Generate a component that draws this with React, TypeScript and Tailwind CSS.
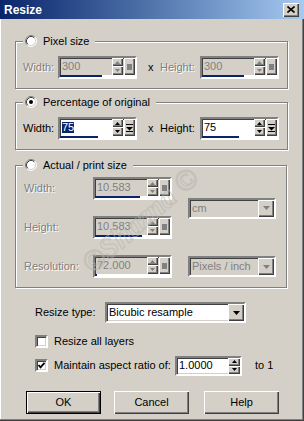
import React from "react";

const sunken =
  "border-2 border-t-[#808080] border-l-[#808080] border-b-white border-r-white shadow-[inset_1px_1px_0_#404040,inset_-1px_-1px_0_#d4d0c8]";
const raised =
  "bg-[#d4d0c8] shadow-[inset_1px_1px_0_#ffffff,inset_-1px_-1px_0_#404040,inset_-2px_-2px_0_#808080]";
const grayText = "text-[#808080] [text-shadow:1px_1px_0_#ffffff]";

function Tri({ up = false, color = "#000", w = 7, h = 4 }: { up?: boolean; color?: string; w?: number; h?: number }) {
  const d = up ? `M0 ${h}H${w}L${w / 2} 0Z` : `M0 0H${w}L${w / 2} ${h}Z`;
  return (
    <svg width={w} height={h} viewBox={`0 0 ${w} ${h}`}>
      <path d={d} fill={color} />
    </svg>
  );
}

function Radio({ checked = false }: { checked?: boolean }) {
  return (
    <svg width="12" height="12" viewBox="0 0 12 12" className="shrink-0">
      <circle cx="6" cy="6" r="5" fill="#fff" />
      <path d="M2.11 9.89A5.5 5.5 0 0 1 9.89 2.11" stroke="#808080" fill="none" />
      <path d="M2.82 9.18A4.5 4.5 0 0 1 9.18 2.82" stroke="#404040" fill="none" />
      <path d="M9.89 2.11A5.5 5.5 0 0 1 2.11 9.89" stroke="#fff" fill="none" />
      <path d="M9.18 2.82A4.5 4.5 0 0 1 2.82 9.18" stroke="#d4d0c8" fill="none" />
      {checked && <circle cx="6" cy="6" r="2" fill="#000" />}
    </svg>
  );
}

function Check({ checked = false }: { checked?: boolean }) {
  return (
    <div className={`w-[13px] h-[13px] bg-white shrink-0 flex items-center justify-center ${sunken}`}>
      {checked && (
        <svg width="9" height="9" viewBox="0 0 9 9">
          <path d="M1.5 4 L3.5 6.3 L7.5 1.8" stroke="#000" strokeWidth="1.8" fill="none" />
        </svg>
      )}
    </div>
  );
}

type FieldProps = {
  value: string;
  enabled?: boolean;
  selected?: boolean;
  bar: number;
};

function NumField({ value, enabled = false, selected = false, bar }: FieldProps) {
  const arrow = enabled ? "#000" : "#808080";
  return (
    <div className={`w-[79px] h-[23px] flex flex-col ${sunken} ${enabled ? "bg-white" : "bg-[#d4d0c8]"}`}>
      <div className="flex h-[17px]">
        <div className="flex-1 flex items-center pl-[2px] leading-none">
          <span className={selected ? "bg-[#0a246a] text-white" : enabled ? "text-black" : "text-[#808080]"}>{value}</span>
        </div>
        <div className="w-[11px] flex flex-col">
          <div className={`h-[8px] flex items-center justify-center ${raised}`}>
            <Tri up w={5} h={3} color={arrow} />
          </div>
          <div className={`h-[9px] flex items-center justify-center ${raised}`}>
            <Tri w={5} h={3} color={arrow} />
          </div>
        </div>
        <div className={`w-[11px] ml-[1px] flex items-center justify-center ${raised}`}>
          {enabled ? (
            <svg width="7" height="8" viewBox="0 0 7 8">
              <rect x="0" y="0" width="7" height="1" fill="#000" />
              <path d="M0 3H7L3.5 6.5Z" fill="#000" />
              <rect x="0" y="7" width="7" height="1" fill="#000" />
            </svg>
          ) : (
            <div className="w-[5px] h-[6px] bg-[#808080]" />
          )}
        </div>
      </div>
      <div className="h-[2px] flex bg-white">
        <div className="h-full bg-[#0a246a]" style={{ width: bar }} />
      </div>
    </div>
  );
}

function Select({ value, enabled = false, w }: { value: string; enabled?: boolean; w: string }) {
  return (
    <div className={`${w} h-[21px] flex ${sunken} ${enabled ? "bg-white" : "bg-[#d4d0c8]"}`}>
      <div className={`flex-1 flex items-center pl-[2px] ${enabled ? "text-black" : "text-[#808080]"}`}>{value}</div>
      <div className={`w-[16px] flex items-center justify-center ${raised}`}>
        <Tri color={enabled ? "#000" : "#808080"} />
      </div>
    </div>
  );
}

function Legend({ label, checked = false }: { label: string; checked?: boolean }) {
  return (
    <legend className="h-[14px] pl-[2px] pr-[6px] -ml-[1px] flex items-center gap-[6px] bg-[#d4d0c8]">
      <Radio checked={checked} />
      <span>{label}</span>
    </legend>
  );
}

const groupBox =
  "border border-[#808080] shadow-[inset_1px_1px_0_#ffffff,1px_1px_0_#ffffff] px-[8px]";

function SizeRow({ enabled, w, h, selected }: { enabled: boolean; w: [string, number]; h: [string, number]; selected?: boolean }) {
  const label = enabled ? "text-black" : grayText;
  return (
    <div className="flex items-center h-[23px] -ml-[1px]">
      <span className={`w-[35px] ${label}`}>Width:</span>
      <NumField value={w[0]} bar={w[1]} enabled={enabled} selected={selected} />
      <span className="ml-[11px] w-[6px]">x</span>
      <span className={`ml-[6px] w-[40px] ${label}`}>Height:</span>
      <NumField value={h[0]} bar={h[1]} enabled={enabled} />
    </div>
  );
}

export default function App() {
  return (
    <div className="relative w-[304px] h-[421px] bg-[#d4d0c8] overflow-hidden text-[11px] text-black font-[family-name:Liberation_Sans,Arial,sans-serif] shadow-[inset_-1px_-1px_0_#404040,inset_-2px_-2px_0_#808080,inset_1px_0_0_#ffffff]">
      <div className="h-[19px] bg-linear-to-r from-[#0a246a] to-[#a6caf0] flex items-center justify-between pl-[4px] pr-[5px]">
        <span className="text-white font-bold text-[12px]">Resize</span>
        <div className={`w-[16px] h-[14px] flex items-center justify-center ${raised}`}>
          <svg width="8" height="7" viewBox="0 0 8 7">
            <path d="M0.5 0.5L7.5 6.5M7.5 0.5L0.5 6.5" stroke="#000" strokeWidth="1.6" />
          </svg>
        </div>
      </div>

      <div className="flex flex-col pl-[15px] pr-[17px] pt-[15px]">
        <fieldset className={`${groupBox} pt-[8px] pb-[9px]`}>
          <Legend label="Pixel size" />
          <SizeRow enabled={false} w={["300", 42]} h={["300", 42]} />
        </fieldset>

        <fieldset className={`${groupBox} mt-[6px] pt-[8px] pb-[9px]`}>
          <Legend label="Percentage of original" checked />
          <SizeRow enabled w={["75", 38]} h={["75", 37]} selected />
        </fieldset>

        <fieldset className={`${groupBox} mt-[8px] pt-[5px] pb-[9px]`}>
          <Legend label="Actual / print size" />
          <div className="grid grid-cols-[69px_95px_88px] grid-rows-[23px_23px_23px] gap-y-[16px] items-center">
            <span className={grayText}>Width:</span>
            <NumField value="10.583" bar={45} />
            <div className="row-span-2 self-center">
              <Select value="cm" w="w-[88px]" />
            </div>
            <span className={grayText}>Height:</span>
            <NumField value="10.583" bar={47} />
            <span className={grayText}>Resolution:</span>
            <NumField value="72.000" bar={2} />
            <Select value="Pixels / inch" w="w-[88px]" />
          </div>
        </fieldset>

        <div className="flex items-center mt-[14px] pl-[20px]">
          <span className="w-[70px]">Resize type:</span>
          <Select value="Bicubic resample" enabled w="w-[141px]" />
        </div>

        <div className="flex items-center gap-[6px] mt-[10px] pl-[20px]">
          <Check />
          <span>Resize all layers</span>
        </div>

        <div className="flex items-center mt-[6px] pl-[20px] h-[20px]">
          <Check checked />
          <span className="ml-[6px] w-[121px]">Maintain aspect ratio of:</span>
          <div className={`w-[67px] h-[20px] flex bg-white ${sunken}`}>
            <div className="flex-1 flex items-center pl-[2px]">1.0000</div>
            <div className="w-[12px] flex flex-col">
              <div className={`h-[8px] flex items-center justify-center ${raised}`}>
                <Tri up w={5} h={3} />
              </div>
              <div className={`h-[8px] flex items-center justify-center ${raised}`}>
                <Tri w={5} h={3} />
              </div>
            </div>
          </div>
          <span className="ml-[13px]">to 1</span>
        </div>

        <div className="flex items-center mt-[15px] pl-[11px]">
          <button className={`w-[75px] h-[23px] border border-black ${raised}`}>OK</button>
          <button className={`w-[75px] h-[23px] ml-[13px] ${raised}`}>Cancel</button>
          <button className={`w-[75px] h-[23px] ml-[15px] ${raised}`}>Help</button>
        </div>
      </div>

      <div className="absolute left-[62px] top-[203px] w-[156px] h-[34px] text-center whitespace-nowrap -rotate-[41deg] pointer-events-none font-[family-name:Liberation_Serif,serif] italic font-bold text-[30px] leading-[34px] text-transparent [-webkit-text-stroke:1px_#b8b4ac] opacity-60">
        ©Shazna ©
      </div>
    </div>
  );
}
